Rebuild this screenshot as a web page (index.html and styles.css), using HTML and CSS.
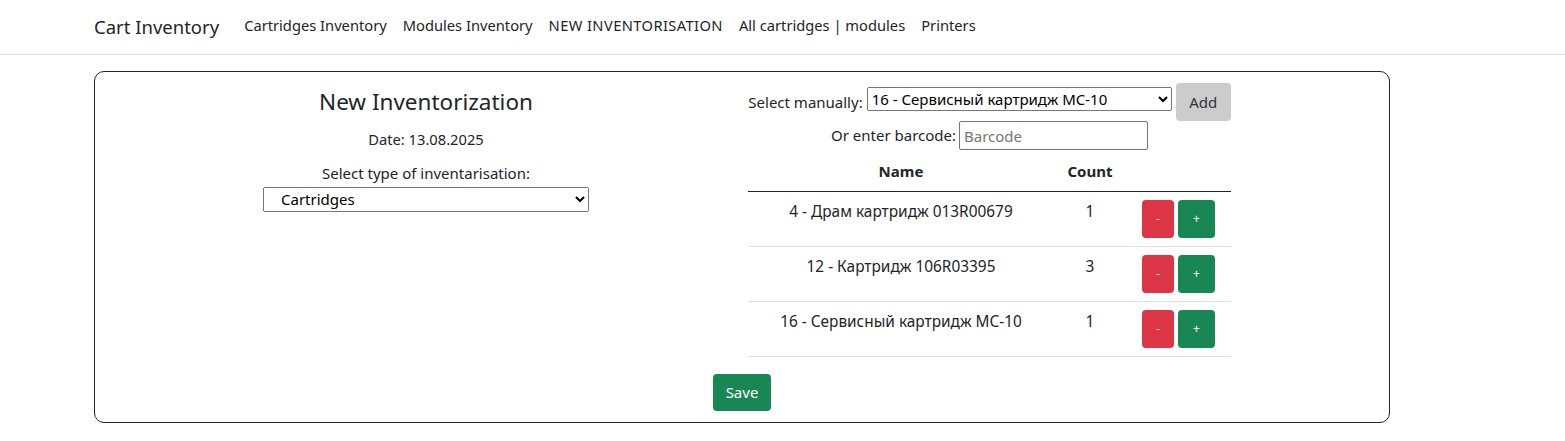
FILE: index.html
```html
<!DOCTYPE html>
<html lang="en">

<head>
    <meta charset="UTF-8">
    <meta name="viewport" content="width=device-width, initial-scale=1.0">
    <title>New Inventorization</title>
    <link rel="stylesheet" href="styles.css">
</head>

<body>

    <nav class="navbar">
        <a class="brand" href="#">Cart Inventory</a>
        <ul class="nav-links">
            <li><a href="#">Cartridges Inventory</a></li>
            <li><a href="#">Modules Inventory</a></li>
            <li><a href="#" class="caps">NEW INVENTORISATION</a></li>
            <li><a href="#">All cartridges | modules</a></li>
            <li><a href="#">Printers</a></li>
        </ul>
    </nav>

    <main class="page">
        <div class="inv-card">
            <div class="inv-cols">
                <div class="inv-left">
                    <h4 class="inv-title">New Inventorization</h4>
                    <p class="inv-date">Date: 13.08.2025</p>
                    <label class="inv-label" for="type">Select type of inventarisation:</label>
                    <select id="type" class="type-select">
                        <option>Cartridges</option>
                        <option>Modules</option>
                    </select>
                </div>

                <div class="inv-right">
                    <div class="picker">
                        <div class="pick-row">
                            <label for="manual">Select manually:</label>
                            <select id="manual" class="manual-select">
                                <option>16 - Сервисный картридж MC-10</option>
                            </select>
                            <button class="btn-add">Add</button>
                        </div>
                        <div class="pick-row barcode-row">
                            <label for="barcode">Or enter barcode:</label>
                            <input id="barcode" class="barcode-input" type="text" placeholder="Barcode">
                        </div>

                        <table class="inv-table">
                            <thead>
                                <tr>
                                    <th class="col-name">Name</th>
                                    <th class="col-count">Count</th>
                                    <th class="col-actions"></th>
                                </tr>
                            </thead>
                            <tbody>
                                <tr>
                                    <td>4 - Драм картридж 013R00679</td>
                                    <td>1</td>
                                    <td><button class="btn-minus">-</button><button class="btn-plus">+</button></td>
                                </tr>
                                <tr>
                                    <td>12 - Картридж 106R03395</td>
                                    <td>3</td>
                                    <td><button class="btn-minus">-</button><button class="btn-plus">+</button></td>
                                </tr>
                                <tr>
                                    <td>16 - Сервисный картридж MC-10</td>
                                    <td>1</td>
                                    <td><button class="btn-minus">-</button><button class="btn-plus">+</button></td>
                                </tr>
                            </tbody>
                        </table>
                    </div>
                </div>
            </div>

            <div class="save-row">
                <button class="btn-save">Save</button>
            </div>
        </div>
    </main>

</body>

</html>
```

FILE: styles.css
```css
*,
*::before,
*::after {
    box-sizing: border-box;
}

body {
    margin: 0;
    font-family: "Noto Sans", "Open Sans", sans-serif;
    font-size: 15px;
    line-height: 1.5;
    color: #212529;
    background: #ffffff;
}

button,
input,
select {
    font-family: inherit;
}

/* top bar */

.navbar {
    display: flex;
    align-items: center;
    height: 55px;
    padding: 0 0 0 94px;
    border-bottom: 1px solid #e1e3e6;
}

.brand {
    font-size: 18.5px;
    color: #212529;
    text-decoration: none;
    margin-right: 25px;
}

.nav-links {
    display: flex;
    margin: 0;
    padding: 0 0 3px;
    list-style: none;
    gap: 16px;
}

.nav-links a {
    font-size: 14.7px;
    color: #212529;
    text-decoration: none;
}

.nav-links .caps {
    letter-spacing: 0.4px;
}

/* card */

.page {
    padding: 16px 0 0 94px;
}

.inv-card {
    width: 1296px;
    border: 1px solid #212529;
    border-radius: 10px;
    padding: 0 15px 11px;
}

.inv-cols {
    display: flex;
}

.inv-left {
    width: 632px;
    text-align: center;
    padding-top: 16px;
}

.inv-title {
    margin: 0;
    font-size: 22.5px;
    font-weight: 400;
    line-height: 1.2;
}

.inv-date {
    margin: 13px 0 0;
    font-size: 14.7px;
}

.inv-label {
    display: block;
    margin-top: 12px;
}

.type-select {
    display: block;
    margin: 2px auto 0;
    width: 326px;
    height: 25px;
    padding-left: 13px;
    font-size: 15px;
    color: #000;
}

.inv-right {
    width: 632px;
    padding: 11px 0 0 6px;
}

.picker {
    width: 483px;
    text-align: center;
}

.pick-row {
    display: flex;
    align-items: center;
    justify-content: center;
    gap: 4px;
}

.manual-select {
    width: 305px;
    height: 24px;
    margin-bottom: 6px;
    font-size: 15px;
    color: #000;
}

.btn-add {
    height: 38px;
    width: 55px;
    border: none;
    border-radius: 4px;
    background: #cccccc;
    color: #333333;
    font-size: 15px;
}

.barcode-row {
    gap: 3px;
}

.barcode-input {
    width: 189px;
    height: 29px;
    border: 1px solid #767676;
    border-radius: 2px;
    padding: 2px 4px;
    font-size: 15px;
}

.barcode-input::placeholder {
    color: #757575;
}

/* table */

.inv-table {
    width: 483px;
    margin: 2px 0 17px;
    border-collapse: collapse;
}

.inv-table th,
.inv-table td {
    padding: 8px;
    text-align: center;
    vertical-align: top;
}

.inv-table th {
    font-weight: 700;
    border-bottom: 1.5px solid #212529;
}

.inv-table td {
    border-bottom: 1px solid #dee2e6;
    font-size: 15.4px;
}

.col-name {
    width: 306px;
}

.col-count {
    width: 72px;
}

.btn-minus,
.btn-plus {
    height: 38px;
    border: none;
    border-radius: 4px;
    color: #ffffff;
    font-size: 12px;
    vertical-align: top;
}

.btn-minus {
    width: 32px;
    background: #dc3545;
    margin-right: 4px;
}

.btn-plus {
    width: 37px;
    background: #198754;
}

.save-row {
    text-align: center;
}

.btn-save {
    height: 37px;
    width: 58px;
    border: none;
    border-radius: 4px;
    background: #198754;
    color: #ffffff;
    font-size: 15px;
}
```
